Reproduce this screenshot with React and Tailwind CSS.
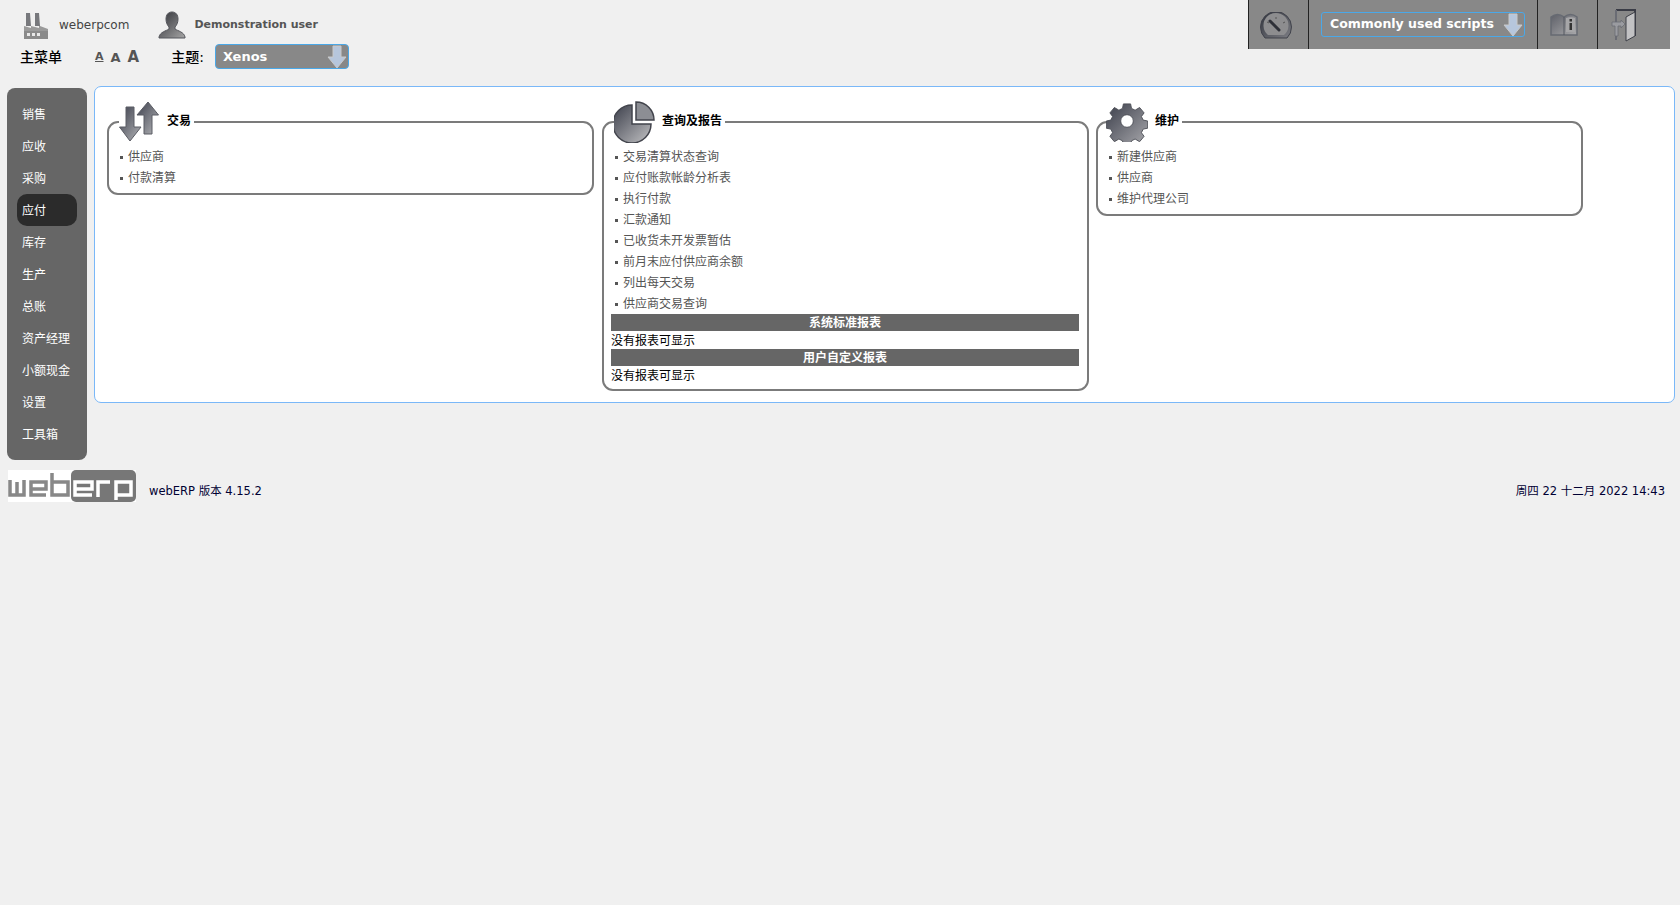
import React from 'react';

const sans = 'font-["DejaVu_Sans","Noto_Sans_CJK_SC",sans-serif]';

const menu = ['销售', '应收', '采购', '应付', '库存', '生产', '总账', '资产经理', '小额现金', '设置', '工具箱'];

function Grad({ id, from = '#3c3f4c', to = '#b4b5b8' }) {
  return (
    <defs>
      <linearGradient id={id} x1="0" y1="0" x2="1" y2="1">
        <stop offset="0" stopColor={from} />
        <stop offset="1" stopColor={to} />
      </linearGradient>
    </defs>
  );
}

function Factory() {
  return (
    <svg width="26" height="28" viewBox="0 0 26 28" className="mt-[1px]">
      <path d="M3 1h4l1 13H3zM12 1h4l1 13h-5z" fill="#77787c" />
      <path d="M1 27V14l7 2v-2l8 2v-2l1 0 8 3v10z" fill="#9a9a9a" />
      <path d="M1 19h24v8H1z" fill="#8a8a8a" />
      <path d="M4 21h3v3H4zM9 21h3v3H9zM14 21h3v3h-3z" fill="#e8e8e8" />
    </svg>
  );
}

function UserIcon() {
  return (
    <svg width="28" height="28" viewBox="0 0 28 28">
      <Grad id="usr" from="#2f3036" to="#a5a5a5" />
      <path
        d="M14 1c4 0 6 3 6 7 0 3-1 6-3 8v2c3 2 9 3 10 8v1H1v-1c1-5 7-6 10-8v-2c-2-2-3-5-3-8 0-4 2-7 6-7z"
        fill="url(#usr)"
        stroke="#55565c"
      />
    </svg>
  );
}

function Gauge() {
  return (
    <svg width="34" height="28" viewBox="0 0 34 28">
      <Grad id="gau" from="#2f323b" to="#7d7e84" />
      <path d="M6 26A15.500 15.500 0 1 1 28 26Z" fill="url(#gau)" stroke="#40424b" strokeWidth="1" />
      <path d="M9 23A12.500 12.500 0 1 1 25 23Z" fill="#8d8d8f" />
      <path d="M11 9l9 9" stroke="#2e3038" strokeWidth="3" strokeLinecap="round" />
      <path d="M17 5v2M8 10l2 1M26 10l-2 1" stroke="#555" />
    </svg>
  );
}

function BookIcon() {
  return (
    <svg width="28" height="24" viewBox="0 0 28 24">
      <Grad id="bk" from="#5f6169" to="#a9a9ab" />
      <path d="M1 4c4-3 9-3 13 0 4-3 9-3 13 0v18H1z" fill="url(#bk)" stroke="#666a72" strokeWidth="1.500" />
      <path d="M14 4v18" stroke="#555860" />
      <path d="M16 5c2-1 7-1 9 0v14h-9z" fill="#a6a6a8" />
      <rect x="19.500" y="6" width="2.500" height="2.500" fill="#333" />
      <rect x="19.500" y="10" width="2.500" height="7" fill="#333" />
    </svg>
  );
}

function DoorIcon() {
  return (
    <svg width="26" height="34" viewBox="0 0 26 34">
      <path d="M5 2h19v26" fill="none" stroke="#3a3c46" strokeWidth="2" />
      <path d="M5 2v30" stroke="#6a6c74" strokeWidth="2" />
      <path d="M15 9l9-5v24l-9 5z" fill="#c2c2c4" stroke="#3e4048" />
      <path d="M1 14h9v-2l4 4-4 4v-2H7v10H4V18H1z" fill="#9a9ba0" stroke="#6a6c74" strokeWidth="0.800" />
    </svg>
  );
}

function DownArrow() {
  return (
    <svg width="20" height="24" viewBox="0 0 20 24">
      <path d="M6 1h8v11h5L10 23 1 12h5z" fill="#b6c6dc" stroke="#c9c9c9" />
    </svg>
  );
}

function ArrowsIcon() {
  return (
    <svg width="40" height="41" viewBox="0 0 40 41">
      <Grad id="arr" />
      <path d="M7 6h8v20h7L11 40 0.500 26H7z" fill="url(#arr)" stroke="#5a5c64" />
      <path d="M18 14L29 1l10.500 13H33v19h-8V14z" fill="url(#arr)" stroke="#5a5c64" />
    </svg>
  );
}

function PieIcon() {
  return (
    <svg width="42" height="42" viewBox="0 0 42 42" className="mt-[2px]">
      <Grad id="pie" from="#3b3e4a" to="#c2c2c4" />
      <path d="M18 4a19 19 0 1 0 19 19H18z" fill="url(#pie)" stroke="#42444c" strokeWidth="1.500" />
      <path d="M22 1a18 18 0 0 1 18 18H22z" fill="#8c8e94" stroke="#42444c" strokeWidth="1.500" />
    </svg>
  );
}

function GearIcon() {
  return (
    <svg width="42" height="42" viewBox="0 0 42 42" className="ml-[-2px]">
      <Grad id="gear" from="#3b3e4a" to="#a9a9ad" />
      <path
        fillRule="evenodd"
        d="M17 2h8l1 5 4 2 5-3 5 6-3 4 2 4 5 1v8l-5 1-2 4 3 4-5 6-5-3-4 2-1 5h-8l-1-5-4-2-5 3-5-6 3-4-2-4-5-1v-8l5-1 2-4-3-4 5-6 5 3 4-2zM21 14a7 7 0 1 0 0 14 7 7 0 0 0 0-14z"
        transform="translate(2.100 2.100) scale(0.900)"
        fill="url(#gear)"
        stroke="#4a4c54"
      />
    </svg>
  );
}

function Logo() {
  return (
    <div className="flex h-[32px] w-[128px] bg-white">
      <svg width="128" height="32" viewBox="0 0 128 32">
        <rect x="63" y="0" width="65" height="32" rx="5" fill="#777" />
        <g fill="none" stroke="#888" strokeWidth="3.500">
          <path d="M2 10v15h7V12M9 25h7V10" />
          <path d="M38 25H23v-6h15v-7H23v7" />
          <path d="M44 3v22h16V12H44" />
        </g>
        <g fill="none" stroke="#fff" strokeWidth="3.500">
          <path d="M84 25H67v-6h17v-7H67v7" />
          <path d="M90 27V12h12" />
          <path d="M108 30V12h15v13h-15" />
        </g>
      </svg>
    </div>
  );
}

function Links({ items }) {
  return (
    <ul className="mt-[24px] flex flex-col pl-[11px] text-[12px] leading-[21px] text-[#555]">
      {items.map((t) => (
        <li key={t} className="flex items-center">
          <span className="mr-[5px] h-[3px] w-[3px] bg-[#555]" />
          {t}
        </li>
      ))}
    </ul>
  );
}

function Box({ title, icon, iconGap, children, className }) {
  return (
    <div className={`relative w-[487px] rounded-[11px] border-2 border-[#7b7b7b] ${className}`}>
      <div className="absolute top-[-22px] left-[10px] flex h-[40px] items-center bg-white pr-[3px]">
        {icon}
        <span className={`text-[12px] font-bold text-black ${iconGap}`}>{title}</span>
      </div>
      {children}
    </div>
  );
}

function ReportBlock({ title }) {
  return (
    <>
      <div className="h-[17px] bg-[#666] text-center text-[12px] leading-[18px] font-bold text-white">{title}</div>
      <div className="h-[18px] text-[12px] leading-[21px] text-black">没有报表可显示</div>
    </>
  );
}

export default function App() {
  return (
    <div className={`min-h-[905px] w-full bg-[#f0f0f0] ${sans}`}>
      <header className="flex h-[88px] items-start justify-between pr-[10px]">
        <div>
          <div className="flex h-[44px] items-center pt-[6px] pl-[23px]">
            <Factory />
            <span className="ml-[10px] text-[12px] text-[#444]">weberpcom</span>
            <span className="ml-[29px]"><UserIcon /></span>
            <span className="ml-[8px] text-[11px] font-bold text-[#555]">Demonstration user</span>
          </div>
          <div className="flex h-[25px] items-center pl-[20px]">
            <span className="mt-[2px] w-[75px] text-[14px] font-medium text-black">主菜单</span>
            <span className="mt-[2px] text-[11px] font-semibold text-[#555] underline">A</span>
            <span className="mt-[2px] ml-[7px] text-[13px] font-semibold text-[#555]">A</span>
            <span className="mt-[2px] ml-[7px] text-[15px] font-semibold text-[#555]">A</span>
            <span className="mt-[2px] ml-[32px] text-[14px] font-medium text-black">主题:</span>
            <div className="ml-[11px] flex h-[25px] w-[134px] items-center justify-between rounded-[4px] border border-[#4aa8e8] bg-[#888] pr-[1px] pl-[7px]">
              <span className="text-[13px] font-semibold text-white">Xenos</span>
              <DownArrow />
            </div>
          </div>
        </div>
        <div className="flex h-[49px] bg-[#888]">
          <div className="flex w-[60px] items-center justify-center border-l border-[#222] pr-[6px]">
            <span className="pt-[3px]"><Gauge /></span>
          </div>
          <div className="flex w-[229px] items-center justify-center border-l border-[#222]">
            <div className="flex h-[25px] w-[204px] items-center justify-between rounded-[3px] border border-[#4aa8e8] pr-[1px] pl-[8px]">
              <span className="text-[12.500px] font-semibold whitespace-nowrap text-white">Commonly used scripts</span>
              <DownArrow />
            </div>
          </div>
          <div className="flex w-[60px] items-center justify-center border-l border-[#222] pr-[7px]"><BookIcon /></div>
          <div className="flex w-[73px] items-center border-l border-[#222] pl-[13px]"><DoorIcon /></div>
        </div>
      </header>

      <div className="flex items-start pr-[5px] pl-[7px]">
        <nav className="h-[372px] w-[80px] shrink-0 rounded-[8px] bg-[#666] pt-[10px] pl-[10px]">
          {menu.map((m) => (
            <div
              key={m}
              className={`flex h-[32px] w-[60px] items-center rounded-[10px] pt-[1px] pl-[5px] text-[12px] text-white ${m === '应付' ? 'bg-[#2b2b2b]' : ''}`}
            >
              {m}
            </div>
          ))}
        </nav>
        <main className="mt-[-2px] ml-[7px] flex h-[317px] flex-1 items-start rounded-[7px] border border-[#7ab8f8] bg-white pt-[34px] pl-[12px]">
          <Box title="交易" iconGap="ml-[8px]" className="h-[74px]" icon={<ArrowsIcon />}>
            <Links items={['供应商', '付款清算']} />
          </Box>
          <Box title="查询及报告" iconGap="ml-[6px]" className="ml-[8px] h-[270px]" icon={<PieIcon />}>
            <Links items={['交易清算状态查询', '应付账款帐龄分析表', '执行付款', '汇款通知', '已收货未开发票暂估', '前月末应付供应商余额', '列出每天交易', '供应商交易查询']} />
            <div className="mt-[-1px] mr-[8px] ml-[7px]">
              <ReportBlock title="系统标准报表" />
              <ReportBlock title="用户自定义报表" />
            </div>
          </Box>
          <Box title="维护" iconGap="ml-[7px]" className="ml-[7px] h-[95px]" icon={<GearIcon />}>
            <Links items={['新建供应商', '供应商', '维护代理公司']} />
          </Box>
        </main>
      </div>

      <footer className="flex items-center justify-between pt-[10px] pr-[15px] pl-[8px] text-[11.500px] text-[#000033]">
        <div className="flex items-center">
          <Logo />
          <span className="mt-[11px] ml-[13px]">webERP 版本 4.15.2</span>
        </div>
        <span className="mt-[11px]">周四 22 十二月 2022 14:43</span>
      </footer>
    </div>
  );
}
